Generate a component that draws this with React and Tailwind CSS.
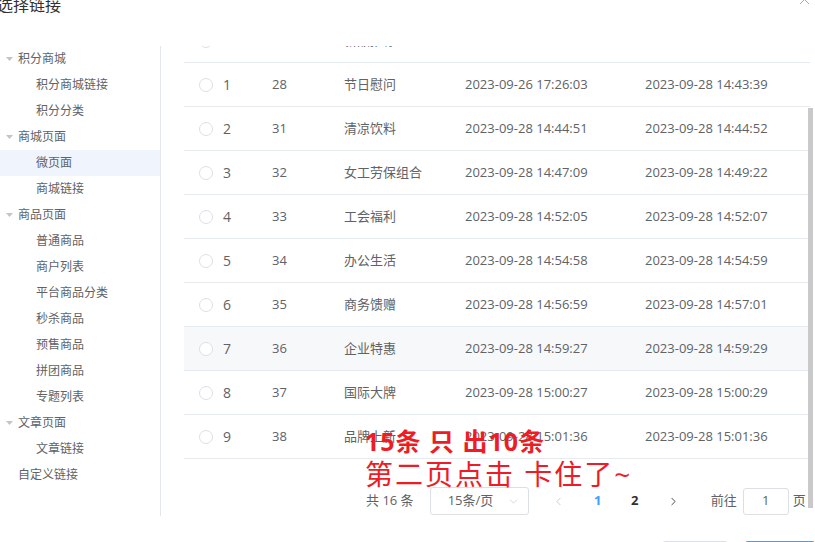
import React from 'react';
import { X, ChevronDown, ChevronLeft, ChevronRight } from 'lucide-react';

const tree = [
  { level: 1, label: '积分商城', caret: true },
  { level: 2, label: '积分商城链接' },
  { level: 2, label: '积分分类' },
  { level: 1, label: '商城页面', caret: true },
  { level: 2, label: '微页面', active: true },
  { level: 2, label: '商城链接' },
  { level: 1, label: '商品页面', caret: true },
  { level: 2, label: '普通商品' },
  { level: 2, label: '商户列表' },
  { level: 2, label: '平台商品分类' },
  { level: 2, label: '秒杀商品' },
  { level: 2, label: '预售商品' },
  { level: 2, label: '拼团商品' },
  { level: 2, label: '专题列表' },
  { level: 1, label: '文章页面', caret: true },
  { level: 2, label: '文章链接' },
  { level: 1, label: '自定义链接' },
];

const rows = [
  { idx: 0, id: 27, name: '新品推荐', created: '2023-09-26 17:20:11', updated: '2023-09-28 14:40:12' },
  { idx: 1, id: 28, name: '节日慰问', created: '2023-09-26 17:26:03', updated: '2023-09-28 14:43:39' },
  { idx: 2, id: 31, name: '清凉饮料', created: '2023-09-28 14:44:51', updated: '2023-09-28 14:44:52' },
  { idx: 3, id: 32, name: '女工劳保组合', created: '2023-09-28 14:47:09', updated: '2023-09-28 14:49:22' },
  { idx: 4, id: 33, name: '工会福利', created: '2023-09-28 14:52:05', updated: '2023-09-28 14:52:07' },
  { idx: 5, id: 34, name: '办公生活', created: '2023-09-28 14:54:58', updated: '2023-09-28 14:54:59' },
  { idx: 6, id: 35, name: '商务馈赠', created: '2023-09-28 14:56:59', updated: '2023-09-28 14:57:01' },
  { idx: 7, id: 36, name: '企业特惠', created: '2023-09-28 14:59:27', updated: '2023-09-28 14:59:29', hover: true },
  { idx: 8, id: 37, name: '国际大牌', created: '2023-09-28 15:00:27', updated: '2023-09-28 15:00:29' },
  { idx: 9, id: 38, name: '品牌上新', created: '2023-09-28 15:01:36', updated: '2023-09-28 15:01:36' },
];

const font = { fontFamily: '"Open Sans", "Noto Sans CJK SC", sans-serif' };

const Caret = () => (
  <svg width="7" height="4" viewBox="0 0 7 4" className="shrink-0">
    <path d="M0 0 L7 0 L3.5 4 Z" fill="#c0c4cc" />
  </svg>
);

const App = () => {
  return (
    <div className="relative w-[815px] h-[542px] overflow-hidden bg-white text-[#606266]" style={font}>
      {/* header */}
      <div className="relative flex h-[46px]">
        <div className="-ml-[3px] -mt-[5px] text-[16px] leading-[20px] text-[#303133]">选择链接</div>
        <X size={17} strokeWidth={1.1} className="absolute right-[2px] -top-[9px] text-[#909399]" />
      </div>

      {/* body */}
      <div className="flex h-[470px]">
        <div className="w-[161px] shrink-0 border-r border-[#e4e7ed]">
          {tree.map((n) => (
            <div
              key={n.label}
              className={`flex items-center h-[26px] text-[12px] ${n.active ? 'bg-[#f0f4fd]' : ''}`}
            >
              <div className="w-[18px] flex justify-center pl-[1px] shrink-0">{n.caret && <Caret />}</div>
              <span className={n.level === 2 ? 'pl-[18px]' : ''}>{n.label}</span>
            </div>
          ))}
        </div>

        <div className="relative flex-1 pl-[23px] overflow-hidden">
          <div className="-mt-[27px] w-[626px] text-[13px]">
            {rows.map((r) => (
              <div
                key={r.idx}
                className={`flex items-center h-[44px] border-b border-[#e6ebf2] ${r.hover ? 'bg-[#f7f8fa]' : ''}`}
              >
                <div className="w-[88px] shrink-0 flex items-center pl-[15px]">
                  <span className="w-[14px] h-[14px] rounded-full border border-[#dcdfe6] bg-white shrink-0" />
                  <span className="ml-[10px] text-[14px]">{r.idx}</span>
                </div>
                <div className="w-[72px] shrink-0">{r.id}</div>
                <div className="w-[121px] shrink-0">{r.name}</div>
                <div className="w-[180px] shrink-0">{r.created}</div>
                <div className="flex-1">{r.updated}</div>
              </div>
            ))}
          </div>

          {/* pagination */}
          <div className="flex items-center h-[28px] mt-[28px] pl-[182px] text-[13px]">
            <span>共 16 条</span>
            <div className="ml-[16px] w-[99px] h-[28px] border border-[#dcdfe6] rounded-[3px] flex items-center pl-[17px] pr-[8px]">
              <span className="flex-1">15条/页</span>
              <ChevronDown size={13} strokeWidth={1.2} className="text-[#c0c4cc]" />
            </div>
            <div className="ml-[15px] w-[30px] flex justify-center text-[#c0c4cc]">
              <ChevronLeft size={13} strokeWidth={1.6} />
            </div>
            <div className="ml-[9px] w-[30px] text-center font-bold text-[#409eff]">1</div>
            <div className="ml-[7px] w-[30px] text-center font-bold text-[#303133]">2</div>
            <div className="ml-[9px] w-[30px] flex justify-center text-[#303133]">
              <ChevronRight size={13} strokeWidth={1.6} />
            </div>
            <span className="ml-[22px]">前往</span>
            <div className="ml-[6px] w-[46px] h-[27px] border border-[#dcdfe6] rounded-[3px] flex items-center justify-center">1</div>
            <span className="ml-[4px]">页</span>
          </div>

          {/* scrollbar thumb */}
          <div className="absolute right-[2px] top-[62px] w-[5px] h-[400px] bg-[#c9c9c9]" />
        </div>
      </div>

      {/* footer buttons, mostly cut off */}
      <div className="flex justify-end gap-[17px] mt-[25px]">
        <div className="w-[66px] h-[30px] border border-[#dcdfe6] rounded-[3px] bg-white" />
        <div className="w-[70px] h-[30px] rounded-[3px] bg-[#409eff]" />
      </div>

      {/* red annotation over the screenshot */}
      <div className="absolute left-[365px] top-[429px] text-[#ee1c25] leading-none pointer-events-none">
        <div className="text-[25px] font-bold tracking-[1px]">15条 只 出10条</div>
        <div className="mt-[6px] text-[28px] tracking-[2px]">第二页点击 卡住了~</div>
      </div>
    </div>
  );
};

export default App;
